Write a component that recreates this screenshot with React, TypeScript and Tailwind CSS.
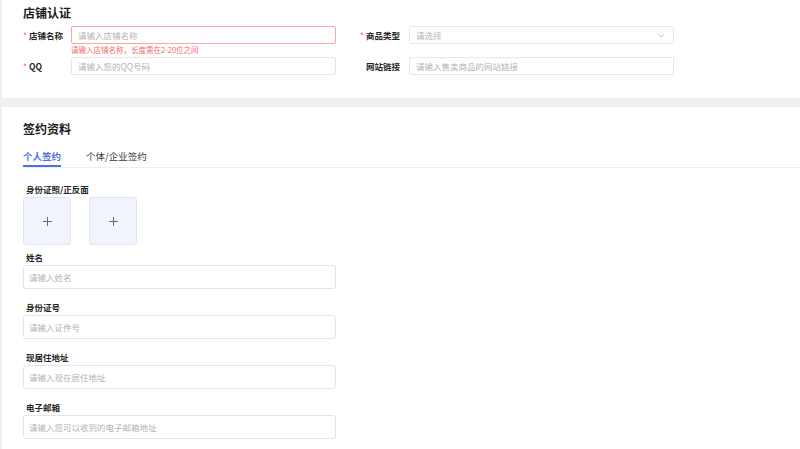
import React from 'react';

const font = { fontFamily: '"Noto Sans CJK SC", "Noto Sans", sans-serif' };

const Field: React.FC<{ label: string; placeholder: string }> = ({ label, placeholder }) => (
  <div className="mt-[13px] first:mt-0">
    <div className="pl-[3px] text-[8.5px] leading-[10px] font-bold text-[#262626]">{label}</div>
    <div className="mt-[3px] h-[24px] w-[313px] rounded-[3px] border border-[#e3e5ea] bg-white px-[5px] flex items-center text-[8.5px] text-[#b3b3b3]">
      {placeholder}
    </div>
  </div>
);

const InlineLabel: React.FC<{ text: string; required?: boolean }> = ({ text, required }) => (
  <div className="w-[48px] h-[18px] flex items-center whitespace-nowrap text-[8.5px] font-bold text-[#262626] shrink-0">
    <span className="w-[6px] text-[#f56c6c] font-normal">{required ? '*' : ''}</span>
    {text}
  </div>
);

export default function App() {
  return (
    <div className="min-h-[449px] bg-[#efefef] pl-[2px]" style={font}>
      {/* 店铺认证 */}
      <div className="bg-white h-[98px] px-[21px] pt-[5px]">
        <h2 className="text-[12px] leading-[16px] font-bold text-[#1a1a1a]">店铺认证</h2>
        <div className="mt-[5px] flex">
          <div className="w-[313px] flex">
            <InlineLabel text="店铺名称" required />
            <div>
              <div className="h-[18px] w-[265px] rounded-[2px] border border-[#f7a8a8] px-[6px] flex items-center text-[8.5px] text-[#b3b3b3]">
                请输入店铺名称
              </div>
              <div className="mt-[1px] text-[7.5px] leading-[10px] text-[#f56c6c]">请输入店铺名称，长度需在2-20位之间</div>
            </div>
          </div>
          <div className="flex pl-[24px]">
            <InlineLabel text="商品类型" required />
            <div className="ml-[1px] h-[18px] w-[265px] rounded-[2px] border border-[#e6e7eb] px-[6px] flex items-center justify-between text-[8.5px] text-[#b3b3b3]">
              <span>请选择</span>
              <svg width="8" height="5" viewBox="0 0 8 5" className="mr-[2px]">
                <path d="M0.5 0.5 L4 4 L7.5 0.5" fill="none" stroke="#bbbbbb" strokeWidth="0.9" />
              </svg>
            </div>
          </div>
        </div>
        <div className="mt-[2px] flex">
          <div className="w-[313px] flex">
            <InlineLabel text="QQ" required />
            <div className="h-[18px] w-[265px] rounded-[2px] border border-[#e6e7eb] px-[6px] flex items-center text-[8.5px] text-[#b3b3b3]">
              请输入您的QQ号码
            </div>
          </div>
          <div className="flex pl-[24px]">
            <InlineLabel text="网站链接" />
            <div className="ml-[1px] h-[18px] w-[265px] rounded-[2px] border border-[#e6e7eb] px-[6px] flex items-center text-[8.5px] text-[#b3b3b3]">
              请输入售卖商品的网站链接
            </div>
          </div>
        </div>
      </div>

      {/* 签约资料 */}
      <div className="mt-[9px] bg-white min-h-[342px] pl-[21px] pt-[14px] pb-[10px]">
        <h2 className="text-[12px] leading-[16px] font-bold text-[#1a1a1a]">签约资料</h2>
        <div className="mt-[12px] flex gap-[25px] border-b border-[#eceef7]">
          <div className="h-[18px] border-b-2 border-[#4e6fe3] -mb-px text-[9.5px] leading-[14px] font-bold text-[#4e6fe3]">个人签约</div>
          <div className="h-[18px] text-[9.5px] leading-[14px] text-[#3a3a3a]">个体/企业签约</div>
        </div>

        <div className="mt-[16px] pl-[3px] text-[8.5px] leading-[10px] font-bold text-[#262626]">身份证照/正反面</div>
        <div className="mt-[3px] flex gap-[18px]">
          {[0, 1].map((i) => (
            <div
              key={i}
              className="w-[48px] h-[48px] rounded-[3px] border border-[#dde4f8] bg-[#f1f4fd] flex items-center justify-center"
            >
              <svg width="9" height="9" viewBox="0 0 9 9">
                <path d="M4.5 0 V9 M0 4.5 H9" stroke="#6b6b6b" strokeWidth="1" />
              </svg>
            </div>
          ))}
        </div>

        <div className="mt-[7px]">
          <Field label="姓名" placeholder="请输入姓名" />
          <Field label="身份证号" placeholder="请输入证件号" />
          <Field label="现居住地址" placeholder="请输入现在居住地址" />
          <Field label="电子邮箱" placeholder="请输入您可以收到的电子邮箱地址" />
        </div>
      </div>
    </div>
  );
}
